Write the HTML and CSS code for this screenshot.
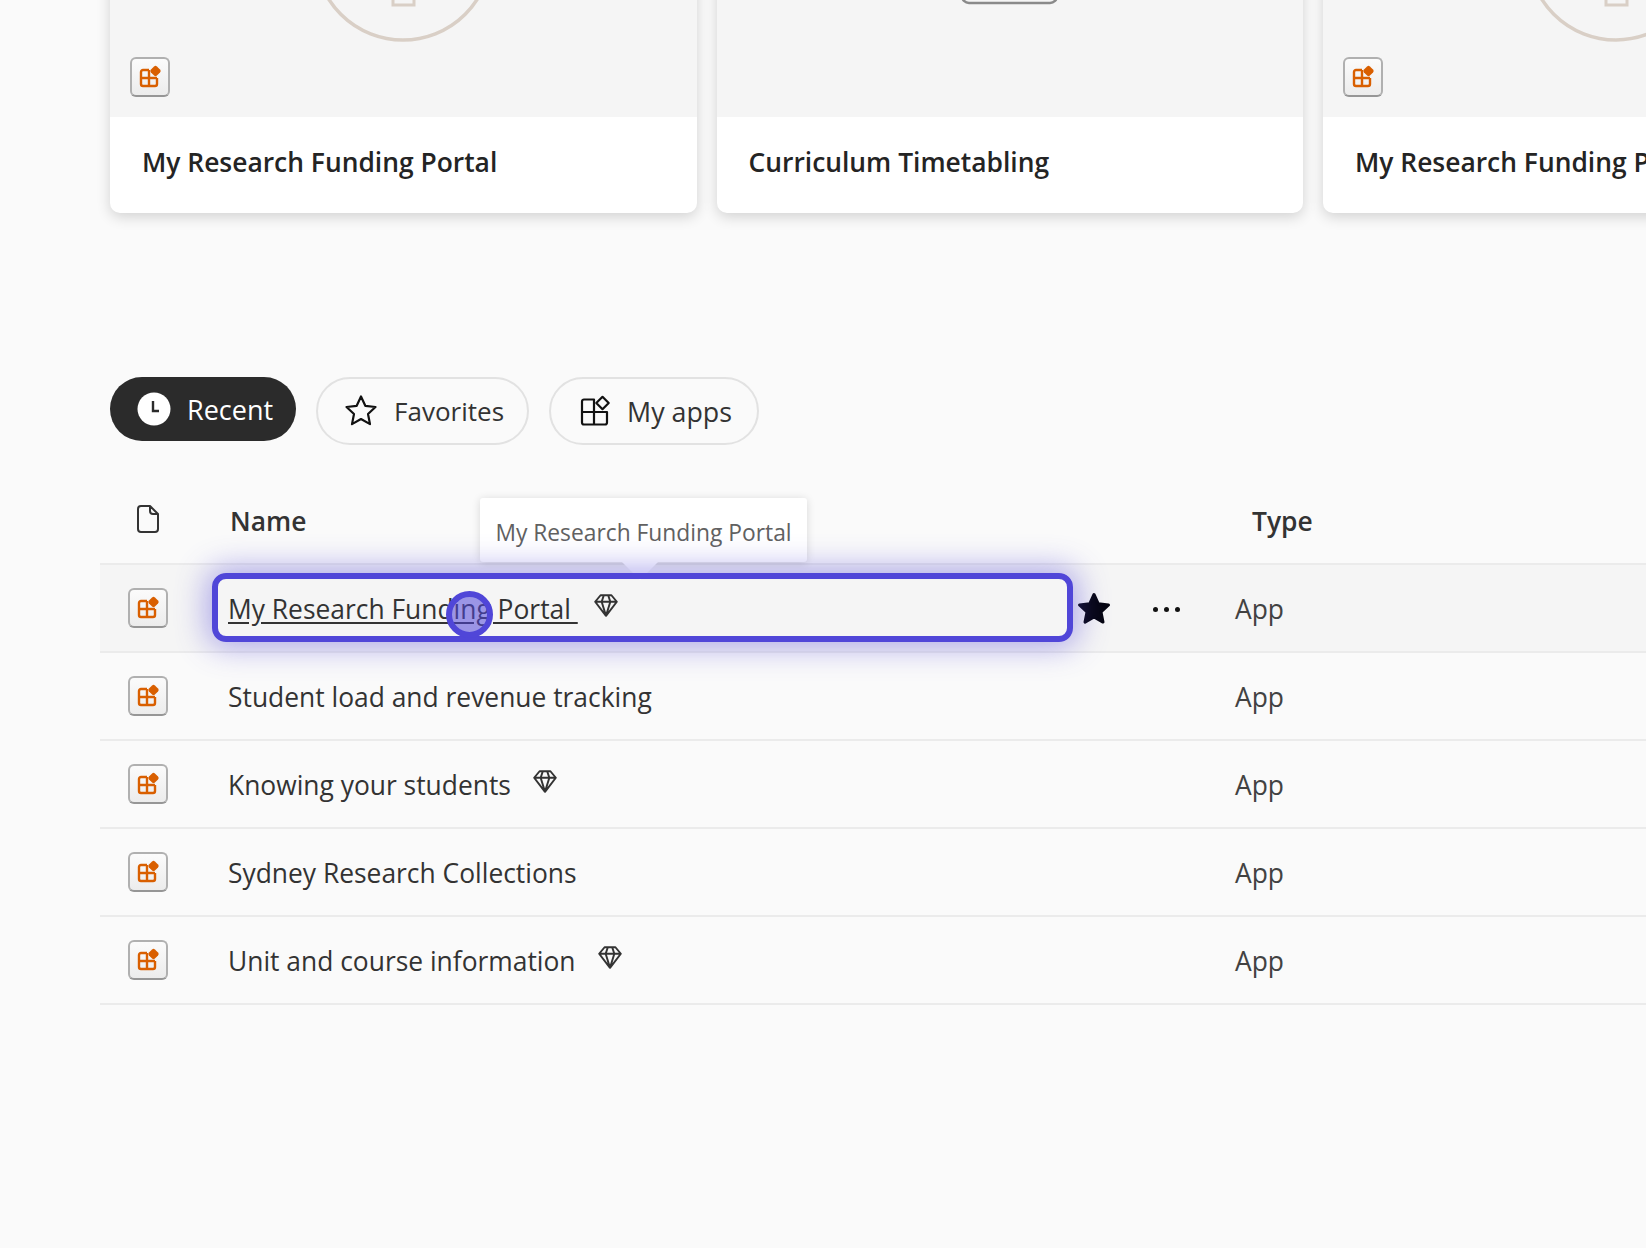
FILE: index.html
```html
<!DOCTYPE html>
<html>
<head>
  <title>Apps</title>
  <meta name="viewport" content="width=device-width, initial-scale=1">
  <link rel="stylesheet" href="styles.css">
</head>
<body>
  <svg class="defs" width="0" height="0">
    <symbol id="app-tile" viewBox="0 0 24 24">
      <path d="M11 5H5a2 2 0 0 0-2 2v12a2 2 0 0 0 2 2h12a2 2 0 0 0 2-2v-6M3 13h16M11 5v16" fill="none" stroke="#d95f00" stroke-width="2.400" stroke-linejoin="round"/>
      <rect x="13.300" y="1.800" width="8.400" height="8.400" rx="2" transform="rotate(45 17.500 6)" fill="#d95f00"/>
    </symbol>
    <symbol id="gem" viewBox="0 0 24 24">
      <path d="M7 3h10l5 6-10 13L2 9zM2 9h20M8 9l4 13 4-13M8 9l2-6M16 9l-2-6" fill="none" stroke="#333" stroke-width="1.800" stroke-linejoin="round"/>
    </symbol>
  </svg>

  <div class="page">
    <div class="cards">
      <div class="card">
        <div class="card-image">
          <svg class="card-art" width="220" height="50" viewBox="0 0 220 50"><circle cx="110" cy="-48" r="88" fill="none" stroke="#d9cfc6" stroke-width="3.500"/><path d="M100 -3h21v8h-21z" fill="none" stroke="#d9cfc6" stroke-width="3"/></svg>
          <div class="tile card-tile"><svg width="24" height="24"><use href="#app-tile"/></svg></div>
        </div>
        <div class="card-title">My Research Funding Portal</div>
      </div>
      <div class="card">
        <div class="card-image">
          <svg class="card-art" width="220" height="50" viewBox="0 0 220 50"><rect x="62" y="-30" width="95" height="33" rx="7" fill="none" stroke="#8a8a8a" stroke-width="2.500"/></svg>
        </div>
        <div class="card-title">Curriculum Timetabling</div>
      </div>
      <div class="card">
        <div class="card-image">
          <svg class="card-art" width="220" height="50" viewBox="0 0 220 50"><circle cx="110" cy="-48" r="88" fill="none" stroke="#d9cfc6" stroke-width="3.500"/><path d="M100 -3h21v8h-21z" fill="none" stroke="#d9cfc6" stroke-width="3"/></svg>
          <div class="tile card-tile"><svg width="24" height="24"><use href="#app-tile"/></svg></div>
        </div>
        <div class="card-title">My Research Funding Portal</div>
      </div>
    </div>

    <div class="tabs">
      <div class="tab tab-active">
        <svg width="34" height="34" viewBox="0 0 34 34"><circle cx="17" cy="17" r="16.500" fill="#fff"/><path d="M16 9v10h6" fill="none" stroke="#2b2b2b" stroke-width="2.400"/></svg>
        Recent
      </div>
      <div class="tab">
        <svg width="34" height="34" viewBox="0 0 34 34"><path d="M17 2.500l4.300 9.300 10.200 1.200-7.500 7 2 10.100L17 25l-9 5.100 2-10.100-7.500-7 10.200-1.200z" fill="none" stroke="#111" stroke-width="2.200" stroke-linejoin="round"/></svg>
        Favorites
      </div>
      <div class="tab tab-apps">
        <svg width="32" height="32" viewBox="0 0 32 32"><path d="M3 6.500a2 2 0 0 1 2-2h10v12.500H3zM3 17h12v12.500H5a2 2 0 0 1-2-2zM15 17h13v10.500a2 2 0 0 1-2 2H15z" fill="none" stroke="#111" stroke-width="2.200" stroke-linejoin="round"/><path d="M23.500 1.800l6.200 6.200-6.200 6.200-6.200-6.200z" fill="none" stroke="#111" stroke-width="2.200" stroke-linejoin="round"/></svg>
        My apps
      </div>
    </div>

    <div class="list">
      <div class="list-head">
        <svg class="file-icon" width="24" height="30" viewBox="0 0 24 30"><path d="M5 2h9l8 8v15a3 3 0 0 1-3 3H5a3 3 0 0 1-3-3V5a3 3 0 0 1 3-3zM14 2v5a3 3 0 0 0 3 3h5" fill="none" stroke="#333" stroke-width="2" stroke-linejoin="round"/></svg>
        <div class="head-name">Name</div>
        <div class="head-type">Type</div>
      </div>

      <div class="row row-active">
        <div class="tile"><svg width="24" height="24"><use href="#app-tile"/></svg></div>
        <div class="row-name">
          <span class="name-link">My Research Funding Portal&nbsp;</span>
          <svg class="gem gem-first" width="26" height="26"><use href="#gem"/></svg>
          <div class="row-actions">
            <svg width="34" height="34" viewBox="0 0 34 34"><path d="M17 2.500l4.300 9.300 10.200 1.200-7.500 7 2 10.100L17 25l-9 5.100 2-10.100-7.500-7 10.200-1.200z" fill="#050510" stroke="#050510" stroke-width="3" stroke-linejoin="round"/></svg>
            <div class="dots"><i></i><i></i><i></i></div>
          </div>
        </div>
        <div class="row-type">App</div>
        <div class="tooltip">My Research Funding Portal</div>
        <div class="tooltip-arrow"></div>
        <div class="focus-ring"></div>
        <div class="click-dot"></div>
      </div>

      <div class="row">
        <div class="tile"><svg width="24" height="24"><use href="#app-tile"/></svg></div>
        <div class="row-name">Student load and revenue tracking</div>
        <div class="row-type">App</div>
      </div>
      <div class="row">
        <div class="tile"><svg width="24" height="24"><use href="#app-tile"/></svg></div>
        <div class="row-name">Knowing your students <svg class="gem" width="26" height="26"><use href="#gem"/></svg></div>
        <div class="row-type">App</div>
      </div>
      <div class="row">
        <div class="tile"><svg width="24" height="24"><use href="#app-tile"/></svg></div>
        <div class="row-name">Sydney Research Collections</div>
        <div class="row-type">App</div>
      </div>
      <div class="row">
        <div class="tile"><svg width="24" height="24"><use href="#app-tile"/></svg></div>
        <div class="row-name">Unit and course information <svg class="gem" width="26" height="26"><use href="#gem"/></svg></div>
        <div class="row-type">App</div>
      </div>
    </div>
  </div>
</body>
</html>
```

FILE: styles.css
```css
html, body {
  margin: 0;
  height: 100%;
}
body {
  font-family: "Open Sans", "Noto Sans", sans-serif;
  color: #333;
  background: #fafafa;
  overflow: hidden;
}
.defs {
  position: absolute;
}
.page {
  width: 1646px;
  height: 1248px;
  overflow: hidden;
}
.cards {
  display: grid;
  grid-template-columns: repeat(3, 586.5px);
  gap: 20px;
  margin: -183px 0 0 110px;
}
.card {
  background: #fff;
  border-radius: 10px;
  overflow: hidden;
  box-shadow: 0 4px 14px rgba(0, 0, 0, 0.16);
}
.card-image {
  position: relative;
  height: 300px;
  background: #f5f5f5;
}
.card-art {
  position: absolute;
  left: 50%;
  top: 183px;
  margin-left: -110px;
  overflow: visible;
}
.card-tile {
  position: absolute;
  left: 20px;
  bottom: 20px;
}
.card-title {
  height: 96px;
  padding-left: 32px;
  font-size: 26.400px;
  font-weight: 600;
  line-height: 90px;
  color: #242424;
}
.tile {
  display: flex;
  align-items: center;
  justify-content: center;
  box-sizing: border-box;
  width: 40px;
  height: 40px;
  border: 2px solid #b0b0b0;
  border-bottom-color: #969696;
  border-radius: 6px;
  background: linear-gradient(#fbfbfb, #ececec);
}

.tabs {
  display: flex;
  align-items: flex-start;
  gap: 20px;
  margin: 164px 0 0 110px;
}
.tab {
  display: flex;
  align-items: center;
  gap: 16px;
  box-sizing: border-box;
  height: 68px;
  padding: 0 23px 0 26px;
  border: 2px solid #e2e2e2;
  border-radius: 34px;
  font-size: 26px;
  color: #333;
}
.tab-active {
  height: 64px;
  padding: 0 23px 0 27px;
  border: 0;
  font-size: 27px;
  background: #2b2b2b;
  color: #fff;
}
.tab-apps {
  padding: 0 25px 0 28px;
  font-size: 26.800px;
}

.list {
  margin: 32px 0 0 100px;
}
.list-head {
  display: flex;
  align-items: center;
  height: 84px;
  padding-top: 2px;
  border-bottom: 2px solid #ebebeb;
  font-size: 26.400px;
  font-weight: 600;
  color: #333;
}
.file-icon {
  margin: 0 0 4px 36px;
}
.head-name {
  margin-left: 70px;
  width: 1022px;
}
.row {
  position: relative;
  display: grid;
  grid-template-columns: 100px 1007px 1fr;
  align-items: center;
  box-sizing: border-box;
  height: 88px;
  padding-left: 28px;
  border-bottom: 2px solid #ebebeb;
  font-size: 26.400px;
}
.row-active {
  background: #f5f5f5;
}
.row-name {
  display: flex;
  align-items: center;
  padding-top: 2px;
}
.name-link {
  text-decoration: underline;
  text-underline-offset: 3px;
}
.row-actions {
  display: flex;
  align-items: center;
  gap: 42px;
  margin-left: auto;
  margin-right: 55px;
}
.dots {
  display: flex;
  gap: 6px;
}
.dots i {
  width: 5px;
  height: 5px;
  border-radius: 50%;
  background: #111;
}
.row-type {
  padding-top: 2px;
  color: #424242;
}
.gem {
  margin: -8px 0 0 21px;
}
.gem-first {
  margin-left: 15px;
}

.tooltip {
  position: absolute;
  left: 380px;
  top: -67px;
  box-sizing: border-box;
  width: 327px;
  height: 64px;
  border-radius: 3px;
  background: #fff;
  box-shadow: 0 1px 8px rgba(0, 0, 0, 0.14);
  font-size: 22.800px;
  line-height: 69px;
  text-align: center;
  color: #616161;
}
.tooltip-arrow {
  position: absolute;
  left: 522px;
  top: -3px;
  border: 18px solid transparent;
  border-top-color: #fff;
  border-bottom: 0;
}
.focus-ring {
  position: absolute;
  left: 112px;
  top: 8px;
  box-sizing: border-box;
  width: 861px;
  height: 69px;
  border: 6px solid #5046d8;
  border-radius: 14px;
  box-shadow: 0 0 30px 6px rgba(80, 70, 216, 0.42);
}
.click-dot {
  position: absolute;
  left: 346px;
  top: 26px;
  box-sizing: border-box;
  width: 47px;
  height: 47px;
  border: 6px solid #5046d8;
  border-radius: 50%;
  background: rgba(80, 70, 216, 0.55);
}
```
